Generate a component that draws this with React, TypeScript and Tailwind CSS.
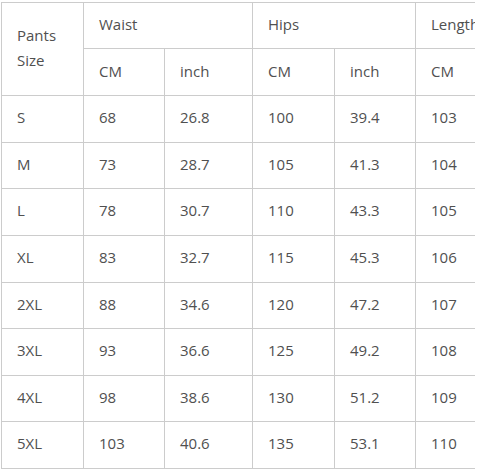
import React from "react";

const rows: [string, string, string, string, string, string, string, number][] = [
  ["S", "68", "26.8", "100", "39.4", "103", "40.6", 47],
  ["M", "73", "28.7", "105", "41.3", "104", "40.9", 46],
  ["L", "78", "30.7", "110", "43.3", "105", "41.3", 47],
  ["XL", "83", "32.7", "115", "45.3", "106", "41.7", 47],
  ["2XL", "88", "34.6", "120", "47.2", "107", "42.1", 46],
  ["3XL", "93", "36.6", "125", "49.2", "108", "42.5", 47],
  ["4XL", "98", "38.6", "130", "51.2", "109", "42.9", 46],
  ["5XL", "103", "40.6", "135", "53.1", "110", "43.3", 47],
];

const head = "border border-[#cccccc] pl-[15px] pr-[10px] pb-[2px] align-middle text-left font-normal";
const cell = "border border-[#cccccc] pl-[15px] pr-[10px] pb-[3px] align-middle text-left font-normal";

export default function App() {
  return (
    <div className="w-[487px] h-[470px] bg-white">
      <div
        className="w-[475px] overflow-hidden pt-[2px] pl-[1px] text-[15px] text-[#505050] leading-[25px]"
        style={{ fontFamily: '"Open Sans", "Noto Sans", sans-serif' }}
      >
        <table className="border-collapse table-fixed w-[576px]">
          <colgroup>
            <col className="w-[82px]" />
            <col className="w-[81px]" />
            <col className="w-[88px]" />
            <col className="w-[82px]" />
            <col className="w-[81px]" />
            <col className="w-[81px]" />
            <col className="w-[81px]" />
          </colgroup>
          <thead>
            <tr className="h-[46px]">
              <th rowSpan={2} className={head}>
                Pants
                <br />
                Size
              </th>
              <th colSpan={2} className={head}>Waist</th>
              <th colSpan={2} className={head}>Hips</th>
              <th colSpan={2} className={head}>Length</th>
            </tr>
            <tr className="h-[47px]">
              <th className={head}>CM</th>
              <th className={head}>inch</th>
              <th className={head}>CM</th>
              <th className={head}>inch</th>
              <th className={head}>CM</th>
              <th className={head}>inch</th>
            </tr>
          </thead>
          <tbody>
            {rows.map((r) => (
              <tr key={r[0]} style={{ height: r[7] }}>
                {r.slice(0, 7).map((v, i) => (
                  <td key={i} className={cell}>
                    {v}
                  </td>
                ))}
              </tr>
            ))}
          </tbody>
        </table>
      </div>
    </div>
  );
}
